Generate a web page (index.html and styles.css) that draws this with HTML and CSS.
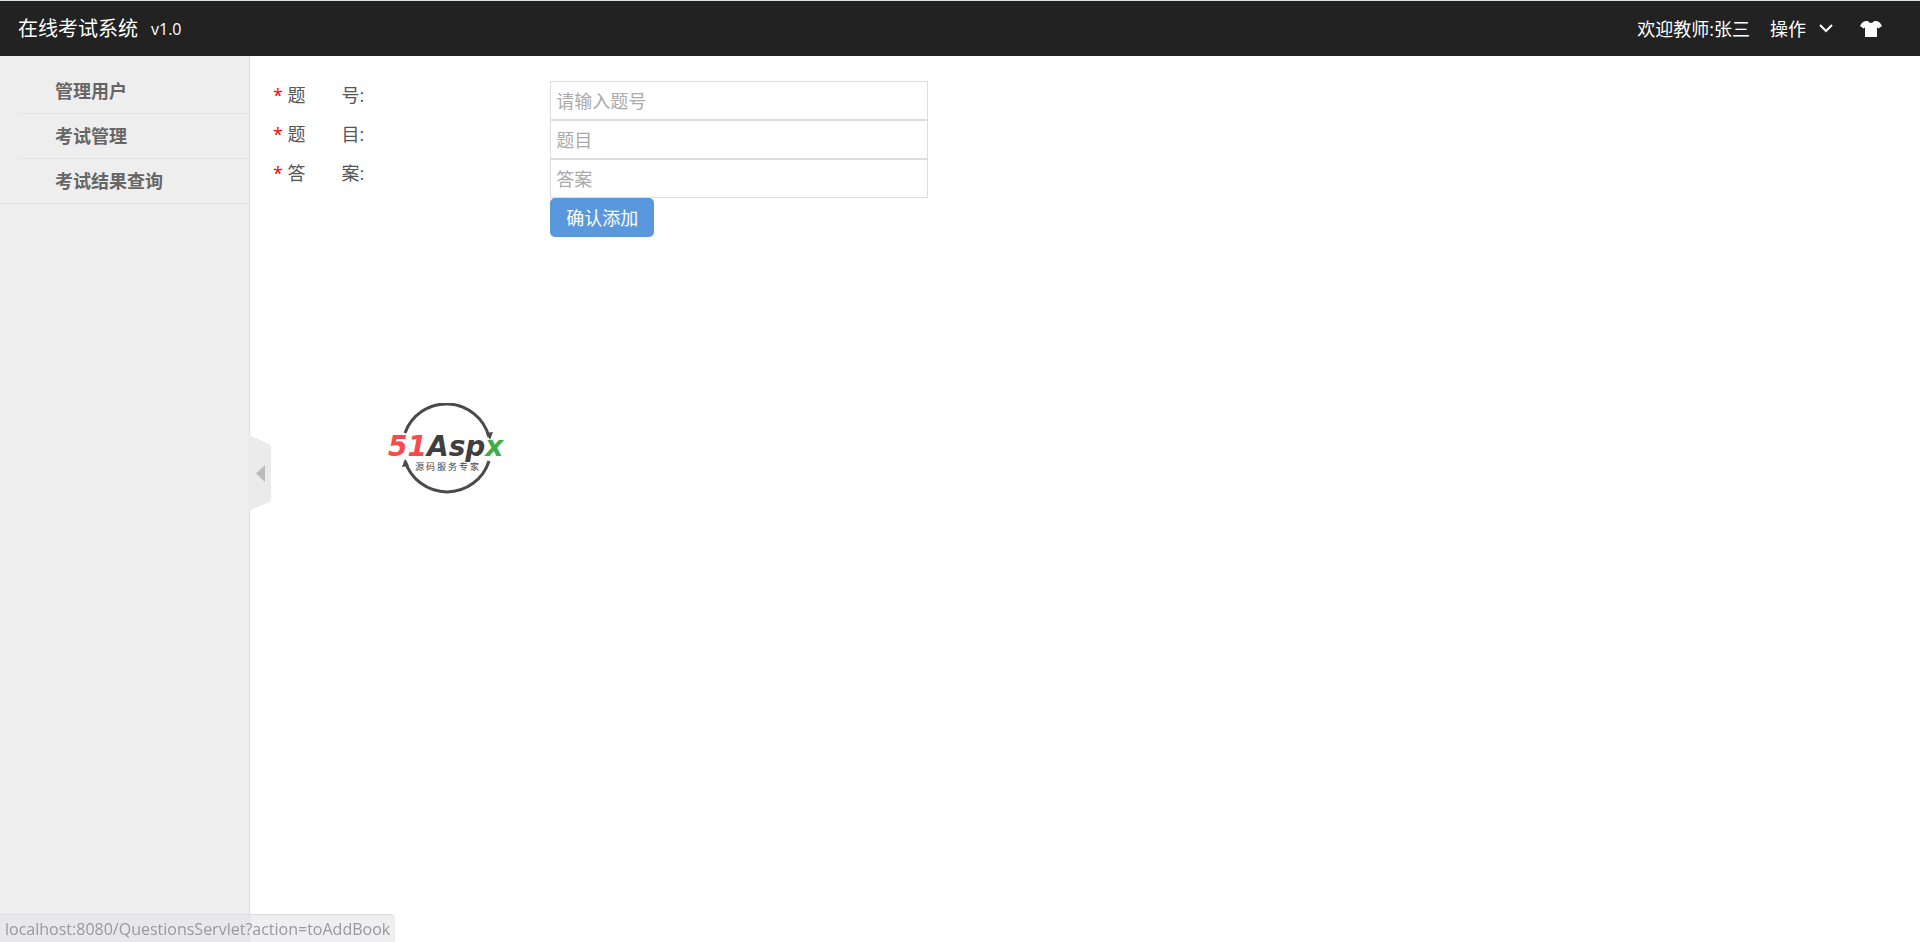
FILE: index.html
```html
<!DOCTYPE html>
<html lang="zh-CN">
<head>
<meta charset="UTF-8">
<meta name="viewport" content="width=device-width, initial-scale=1.0">
<title>在线考试系统</title>
<link rel="stylesheet" href="styles.css">
</head>
<body>
<header class="navbar">
  <a class="logo" href="#">在线考试系统</a>
  <span class="version">v1.0</span>
  <nav class="userbar">
    <span>欢迎教师:张三</span>
    <button type="button" class="dropdown">操作
      <svg width="14" height="9" viewBox="0 0 14 9"><path d="M1 1l6 6 6-6" fill="none" stroke="#fff" stroke-width="2"/></svg>
    </button>
    <button type="button" class="skin" aria-label="换肤">
      <svg width="22" height="16" viewBox="0 0 22 16"><path d="M6 0h2c1 2.600 5 2.600 6 0h2c3 .4 4.600 2 6 5l-3.600 2.400L17 6.200V16H5V6.200L3.600 7.400 0 5C1.400 2 3 .4 6 0z" fill="#fff"/></svg>
    </button>
  </nav>
</header>

<div class="layout">
  <aside class="sidebar">
    <ul class="menu">
      <li><a href="#">管理用户</a></li>
      <li><a href="#">考试管理</a></li>
      <li><a href="#">考试结果查询</a></li>
    </ul>
    <button type="button" class="toggle" aria-label="收起菜单">
      <svg width="22" height="76" viewBox="0 0 22 76"><path d="M0 0l20 9q2 1 2 3v52q0 2-2 3L0 76z" fill="#ebebeb"/><path d="M16 30v17l-9-8.500z" fill="#bbb"/></svg>
    </button>
  </aside>

  <main class="content">
    <form class="form">
      <div class="row">
        <label for="number"><span class="required">*</span> 题&emsp;&emsp;号:</label>
        <div class="field"><input type="text" id="number" placeholder="请输入题号"></div>
      </div>
      <div class="row">
        <label for="title"><span class="required">*</span> 题&emsp;&emsp;目:</label>
        <div class="field"><input type="text" id="title" placeholder="题目"></div>
      </div>
      <div class="row">
        <label for="answer"><span class="required">*</span> 答&emsp;&emsp;案:</label>
        <div class="field"><input type="text" id="answer" placeholder="答案"></div>
      </div>
      <div class="row">
        <div class="field submit"><button type="submit" class="btn">确认添加</button></div>
      </div>
    </form>
    <svg class="watermark" width="132" height="96" viewBox="0 0 132 96">
      <g fill="none" stroke="#4a4a4c" stroke-width="3">
        <path d="M21 30A44 44 0 0 1 105 34"/>
        <path d="M21 58A44 44 0 0 0 105 58"/>
      </g>
      <path d="M102 30l4 7 3-8zM25 63l-4-7-3 8z" fill="#4a4a4c"/>
      <text class="brand" x="4" y="53"><tspan fill="#f9494c">51</tspan><tspan fill="#3f3f41">Asp</tspan><tspan fill="#3fae49">x</tspan></text>
      <text class="slogan" x="31" y="67">源 码 服 务 专 家</text>
    </svg>
  </main>
</div>

<div class="status">localhost:8080/QuestionsServlet?action=toAddBook</div>
</body>
</html>
```

FILE: styles.css
```css
* {
  box-sizing: border-box;
}

body {
  margin: 0;
  min-height: 100vh;
  display: flex;
  flex-direction: column;
  font-family: "Open Sans", "Noto Sans CJK SC", sans-serif;
  font-size: 18px;
  line-height: 26px;
  color: #555;
  background-color: #fff;
}

a {
  color: inherit;
  text-decoration: none;
}

button {
  font: inherit;
  color: inherit;
  padding: 0;
  border: none;
  background: none;
  cursor: pointer;
}

svg {
  display: block;
}

.navbar {
  display: flex;
  align-items: center;
  height: 56px;
  padding: 0 38px 0 18px;
  border-top: 1px solid #dde3e1;
  background-color: #222;
  color: #fff;
}

.logo {
  font-size: 20px;
}

.version {
  margin-left: 13px;
  font-size: 16px;
}

.userbar {
  display: flex;
  align-items: center;
  margin-left: auto;
}

.dropdown {
  display: flex;
  align-items: center;
  gap: 13px;
  margin: 0 27px 0 20px;
}

.layout {
  flex: 1;
  display: flex;
}

.sidebar {
  position: relative;
  width: 250px;
  border-right: 1px solid #ddd;
  background-color: #eee;
}

.menu {
  margin: 0;
  padding: 13px 0 0;
  list-style: none;
  border-bottom: 1px solid #e3e3e3;
}

.menu li {
  margin-left: 18px;
}

.menu li + li {
  border-top: 1px solid #e3e3e3;
}

.menu a {
  display: block;
  padding: 9px 0 9px 37px;
  font-weight: bold;
  color: #666;
}

.toggle {
  position: absolute;
  left: 100%;
  top: 379px;
}

.content {
  position: relative;
  flex: 1;
  padding-top: 25px;
}

.row {
  display: grid;
  grid-template-columns: 2fr 3fr 7fr;
}

.row label {
  padding: 1px 0 0 23px;
}

.required {
  color: #f00;
}

.field {
  padding: 0 18px 0 22px;
}

.submit {
  grid-column: 2;
}

.field input {
  display: block;
  width: 100%;
  height: 39px;
  padding: 0 5px;
  border: 1px solid #ddd;
  font: inherit;
}

.field input::placeholder {
  color: #aaa;
}

.btn {
  height: 39px;
  padding: 0 16px;
  border-radius: 5px;
  background-color: #5a98de;
  color: #fff;
}

/* floating watermark over the page */
.watermark {
  position: absolute;
  left: 134px;
  top: 347px;
}

.brand {
  font: italic bold 28px "DejaVu Sans", sans-serif;
}

.slogan {
  font: 9px "Noto Sans CJK SC", sans-serif;
  fill: #444;
}

.status {
  position: fixed;
  left: 0;
  bottom: 0;
  padding: 1px 5px 0;
  border-top: 1px solid #dcdcdc;
  border-top-right-radius: 5px;
  background-color: rgba(228, 229, 232, 0.6);
  font-size: 16px;
  color: #999;
}
```
